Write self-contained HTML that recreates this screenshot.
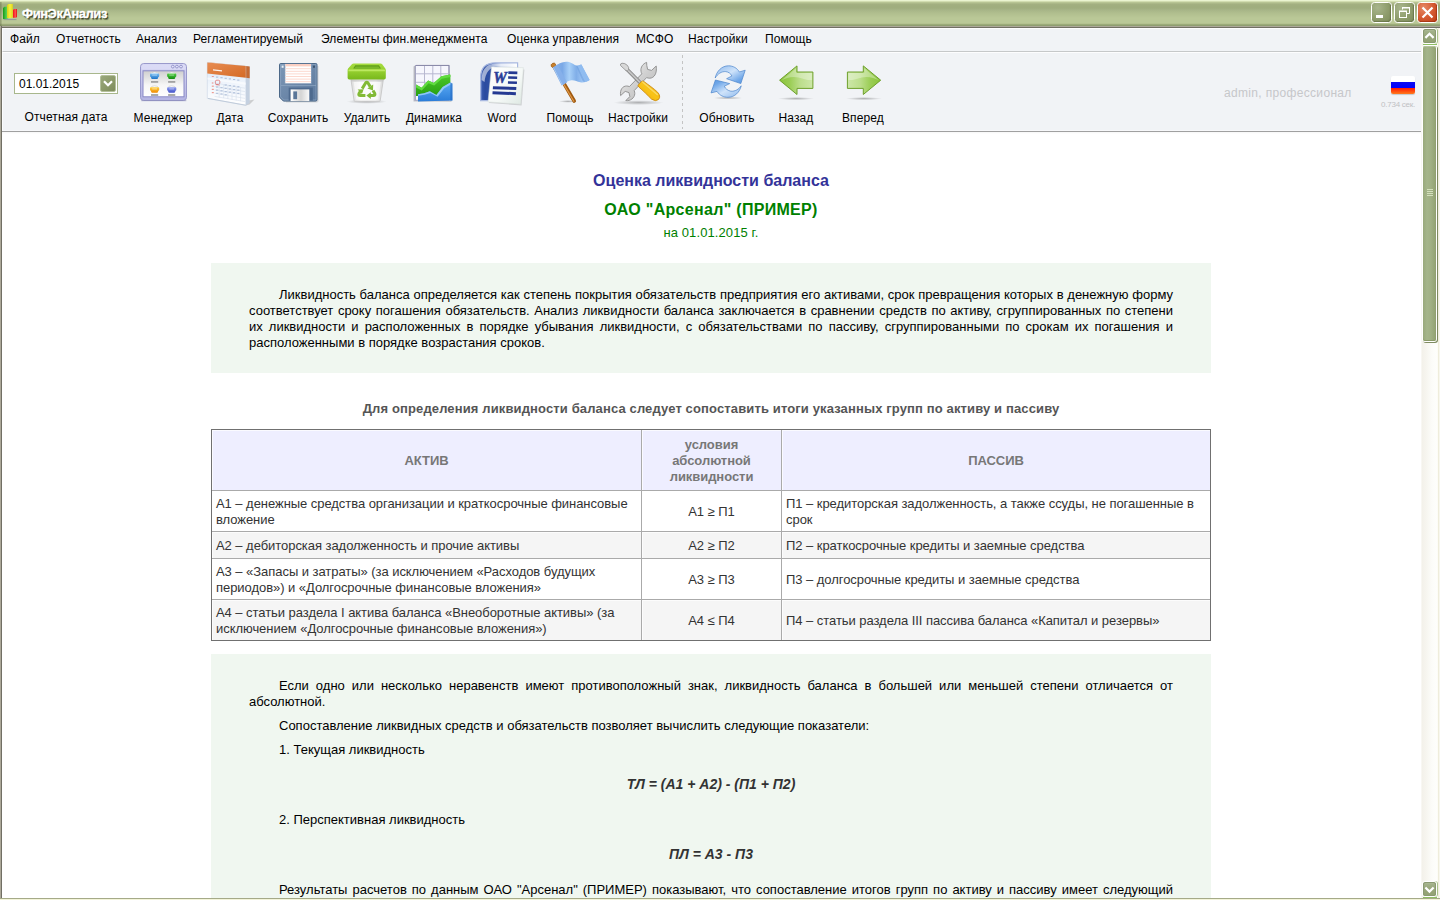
<!DOCTYPE html>
<html lang="ru">
<head>
<meta charset="utf-8">
<title>ФинЭкАнализ</title>
<style>
*{box-sizing:border-box;margin:0;padding:0}
html,body{width:1440px;height:900px;overflow:hidden;background:#fff;font-family:"Liberation Sans",sans-serif;}
body{position:relative;color:#000}
#titlebar{position:absolute;left:0;top:0;width:1440px;height:28px;
 background:linear-gradient(to bottom,#eaf4d0 0,#eaf4d0 1px,#d2ddb0 1px,#d2ddb0 2px,#b7c493 2px,#b7c493 3px,#abb888 3px,#abb888 4px,#a3b081 4px,#a0ae7e 6px,#a0ae7e 8px,#a7b587 10px,#b0be8e 13px,#b8c695 17px,#bac897 18px,#bac897 23px,#b4c290 23px,#b4c290 24px,#9cab7a 24px,#9cab7a 25px,#8f9e70 25px,#8f9e70 26px,#aca899 26px,#aca899 27px,#716f64 27px,#716f64 28px);}
#titlebar:before{content:"";position:absolute;left:0;top:2px;width:2px;height:24px;background:linear-gradient(to right,rgba(90,100,60,.45),rgba(90,100,60,.15))}
#titlebar .ttl{position:absolute;left:22px;top:6px;font-size:13px;font-weight:bold;color:#fff;letter-spacing:-0.45px;-webkit-text-stroke:.35px #fff;text-shadow:1px 1px 0 #3a4222,1.5px 1.5px 1px rgba(50,58,30,.6);white-space:nowrap}
#lborder{position:absolute;left:0;top:26px;width:2px;height:872px;background:linear-gradient(to right,#aca899 0,#aca899 1px,#716f64 1px,#716f64 2px)}
#bborder{position:absolute;left:0;top:898px;width:1440px;height:2px;background:linear-gradient(to bottom,#a5aa88 0,#a5aa88 1px,#f3f4d9 1px,#f3f4d9 2px)}
#menubar{position:absolute;left:2px;top:28px;width:1419px;height:24px;background:#f1f3f6;border-top:1px solid #fdfdfe;border-left:1px solid #fbfcfd;border-bottom:1px solid #c6c8c9;font-size:12px;letter-spacing:.1px;white-space:nowrap}
#menubar span{position:absolute;top:3px;margin-left:-1px}
#toolbar{position:absolute;left:2px;top:52px;width:1419px;height:80px;background:#f1f3f6;border-top:1px solid #fdfdfe;border-bottom:1px solid #a0a0a0;box-shadow:inset 1px 0 0 #fbfcfd,inset 0 -1px 0 #f7f8fa}
.tb{position:absolute;top:0;height:80px;font-size:12px;letter-spacing:.12px;text-align:center;white-space:nowrap}
.tb svg{position:absolute;left:50%;margin-left:-24px;top:6px}
.tb .lb{position:absolute;left:-62px;width:124px;top:58px;text-align:center}
#content{position:absolute;left:2px;top:132px;width:1419px;height:766px;background:linear-gradient(to bottom,#f7f7f7 0,#fff 2px);overflow:hidden}
#doc{position:absolute;left:209px;top:0;width:1000px;}
.gbox{background:#f0f7f0;padding:0 38px;font-size:13px;line-height:16px;text-align:justify}
.gbox p{text-indent:30px}
table.t{border-collapse:separate;border-spacing:0;width:1000px;font-size:13px;color:#333;table-layout:fixed;border:1px solid #707070}
table.t td,table.t th{border:0;border-left:1px solid #aaa;border-top:1px solid #aaa;padding:2px 4px 0 4px;line-height:16px;vertical-align:middle;letter-spacing:-.05px;box-shadow:inset 1px 1px 0 rgba(255,255,255,.7)}
table.t tr>*:first-child{border-left:0}table.t tr.hr th{border-top:0}
table.t th{background:#eeeeff;color:#777;font-weight:bold;font-size:13px;text-align:center}

#datebox{position:absolute;left:12px;top:20px;width:104px;height:21px;border:1px solid #a8b78c;background:#fff;font-size:12px}
#datebox span{position:absolute;left:4px;top:3px}
#datebox i{position:absolute;right:1px;top:1px;width:16px;height:17px;background:linear-gradient(135deg,#9aa87c,#8a9868 60%,#7d8b5c);border:1px solid #b4c09c;border-radius:2px;display:block}
#datebox i svg{position:absolute;left:-1px;top:-1px}
#tbsep{position:absolute;left:680px;top:2px;width:1px;height:74px;background:repeating-linear-gradient(to bottom,#c4c4c4 0,#c4c4c4 3px,transparent 3px,transparent 6px)}
#user{position:absolute;left:1222px;top:33px;font-size:12px;letter-spacing:.33px;color:#c6c7ca;white-space:nowrap}
#flag{position:absolute;left:1389px;top:23px;width:24px;height:18px;border-radius:2px;background:linear-gradient(to bottom,#fff 0,#fff 6px,#0a0af0 6px,#0000ff 12px,#ff1a00 12px,#ff7a1c 18px);box-shadow:0 1px 1px rgba(0,0,0,.18)}
#sec{position:absolute;left:1353px;width:60px;text-align:right;top:47px;font-size:8px;line-height:10px;letter-spacing:-.25px;color:#bfc0c3;white-space:nowrap}
.h1{position:absolute;left:0;width:1000px;top:40px;text-align:center;font-size:16px;font-weight:bold;color:#333399;white-space:nowrap}
.h2{position:absolute;left:0;width:1000px;top:69px;text-align:center;font-size:16px;letter-spacing:0.3px;font-weight:bold;color:#008000;white-space:nowrap}
.h3{position:absolute;left:0;width:1000px;top:93px;text-align:center;font-size:13px;letter-spacing:.1px;color:#008000;white-space:nowrap}
#g1{position:absolute;left:0;top:131px;width:1000px;height:110px;padding-top:24px}
.h4{position:absolute;left:0;width:1000px;top:269px;text-align:center;font-size:13px;letter-spacing:0.13px;font-weight:bold;color:#555;white-space:nowrap}
table.t{position:absolute;left:0;top:297px}
table.t td.c{text-align:center}
table.t tr.alt td{background:#f5f5f5}
table.t tr.hr th{height:60px}table.t tr.r1 td,table.t tr.r3 td,table.t tr.r4 td{height:41px}table.t tr.r2 td{height:27px}
#g2{position:absolute;left:0;top:522px;width:1000px;height:300px;padding-top:24px}
.f{text-align:center;font-weight:bold;font-style:italic;font-size:14px;color:#333;text-indent:0}

.wb{position:absolute;top:2px;width:21px;height:21px;border:1px solid #fff;border-radius:3.5px;background:radial-gradient(ellipse at 30% 25%,#a8b58c 0,#8f9d6d 55%,#7d8c5a 100%);box-shadow:inset -1px -1px 1px rgba(60,70,30,.35)}
.wb.cl{background:radial-gradient(ellipse at 30% 25%,#e58a66 0,#d55c34 50%,#c03c14 100%);box-shadow:inset -1px -1px 1px rgba(120,30,0,.45)}
.wb svg{position:absolute;left:0;top:0}
#vscroll{position:absolute;left:1421px;top:28px;width:19px;height:870px;background:linear-gradient(to right,#fdfdfb 0,#f3f1ea 1px,#f6f5ef 5px,#fcfcf9 11px,#fefefc 16px,#fbfaf2 17px,#efeddc 17px,#efeddc 18px,#f8f7ee 18px)}
.sbtn{position:absolute;left:1px;width:15px;height:16px;background:#fff;border-radius:3px;box-shadow:1px 0 0 #a9c38a}
.sbtn svg{position:absolute;left:1px;top:1px;background:linear-gradient(to bottom,#b9c7a2 0,#a3b28a 2px,#97a679 50%,#93a273 100%);border-radius:2.5px;box-shadow:inset 0 0 0 1px #8a9971}
.sline{position:absolute;left:2px;width:14px;height:1px;background:#8fbf62}
#thumb{position:absolute;left:1px;top:17px;width:15px;height:297px;background:#fff;border-radius:3px;box-shadow:1px 1px 0 #7f8b61}
#thumb:before{content:"";position:absolute;left:1px;top:1px;width:13px;bottom:1px;border-radius:2px;background:linear-gradient(to right,#99a97b 0,#a5b58a 4px,#a0b083 8px,#94a474 12px,#8e9e6e 13px);box-shadow:inset 0 1px 0 #b4c29c,inset 0 -1px 0 #8a9a68}
#thumb i{position:absolute;left:5px;top:144px;width:6px;height:8px;background:repeating-linear-gradient(to bottom,#d4e0bc 0,#d4e0bc 1px,transparent 1px,transparent 2px)}
</style>
</head>
<body>
<div id="titlebar">
 <svg width="18" height="20" style="position:absolute;left:2px;top:2px" viewBox="2 2 18 20">
  <defs><linearGradient id="tg" x1="0" y1="0" x2="1" y2="0"><stop offset="0" stop-color="#189818"/><stop offset=".45" stop-color="#44c444"/><stop offset="1" stop-color="#7ae67a"/></linearGradient>
  <linearGradient id="ty" x1="0" y1="0" x2="1" y2="0"><stop offset="0" stop-color="#d8d010"/><stop offset=".5" stop-color="#f4f040"/><stop offset="1" stop-color="#e0d818"/></linearGradient>
  <linearGradient id="tr" x1="0" y1="0" x2="1" y2="0"><stop offset="0" stop-color="#f01414"/><stop offset=".6" stop-color="#ff5050"/><stop offset="1" stop-color="#e01010"/></linearGradient></defs>
  <path d="M3.5 19.6H16.5" stroke="#6a6a9a" stroke-width="1" opacity=".5"/>
  <path d="M3 8L4.5 6.8H8.8V18L7.5 19H3Z" fill="url(#tg)"/>
  <path d="M7 5.2L8.4 4H12.8V17.2L11.5 18H7Z" fill="url(#ty)"/>
  <path d="M13 10L14 9H17V17L16 17.8H13Z" fill="url(#tr)"/>
 </svg>
 <div class="ttl">ФинЭкАнализ</div>
</div>
<div class="wb" style="left:1371px"><svg width="19" height="19" viewBox="0 0 19 19"><rect x="4" y="12" width="7" height="3" fill="#fff"/></svg></div>
<div class="wb" style="left:1394px"><svg width="19" height="19" viewBox="0 0 19 19"><path d="M7.5 6.5V4.5H14.5V10.5H12" fill="none" stroke="#fff" stroke-width="1"/><path d="M7 4.75H15" stroke="#fff" stroke-width="1.5"/><rect x="4.5" y="8.5" width="7" height="6" fill="none" stroke="#fff" stroke-width="1"/><path d="M4 8.25H12" stroke="#fff" stroke-width="1.5"/></svg></div>
<div class="wb cl" style="left:1417px"><svg width="19" height="19" viewBox="0 0 19 19"><path d="M4.5 4.5L14.5 14.5M14.5 4.5L4.5 14.5" stroke="#fff" stroke-width="2.2" stroke-linecap="butt"/></svg></div>
<div id="menubar">
 <span style="left:8px">Файл</span><span style="left:54px">Отчетность</span><span style="left:134px">Анализ</span><span style="left:191px">Регламентируемый</span><span style="left:319px">Элементы фин.менеджмента</span><span style="left:505px">Оценка управления</span><span style="left:634px">МСФО</span><span style="left:686px">Настройки</span><span style="left:763px">Помощь</span>
</div>
<div id="toolbar">
 <div id="datebox"><span>01.01.2015</span><i><svg width="16" height="17" viewBox="0 0 16 17"><path d="M4 6.2 L8 10.2 L12 6.2" fill="none" stroke="#fff" stroke-width="2.2"/></svg></i></div>
 <div class="tb" style="left:64px"><div class="lb" style="top:57px">Отчетная дата</div></div>
 <div class="tb" style="left:161px"><!--ICON1--><div class="lb">Менеджер</div></div>
 <div class="tb" style="left:228px"><!--ICON2--><div class="lb">Дата</div></div>
 <div class="tb" style="left:296px"><!--ICON3--><div class="lb">Сохранить</div></div>
 <div class="tb" style="left:365px"><!--ICON4--><div class="lb">Удалить</div></div>
 <div class="tb" style="left:432px"><!--ICON5--><div class="lb">Динамика</div></div>
 <div class="tb" style="left:500px"><!--ICON6--><div class="lb">Word</div></div>
 <div class="tb" style="left:568px"><!--ICON7--><div class="lb">Помощь</div></div>
 <div class="tb" style="left:636px"><!--ICON8--><div class="lb">Настройки</div></div>
 <div id="tbsep"></div>
 <div class="tb" style="left:725px"><!--ICON9--><div class="lb">Обновить</div></div>
 <div class="tb" style="left:794px"><!--ICON10--><div class="lb">Назад</div></div>
 <div class="tb" style="left:861px"><!--ICON11--><div class="lb">Вперед</div></div>
 <div id="user">admin, профессионал</div>
 <div id="flag"></div>
 <div id="sec">0.734 сек.</div>
</div>
<svg id="icons" style="position:absolute;left:0;top:52px" width="1440" height="80" viewBox="0 52 1440 80">
<defs>
 <linearGradient id="gMgr" x1="0" y1="0" x2="0" y2="1"><stop offset="0" stop-color="#d6d6f4"/><stop offset="1" stop-color="#b4b4e2"/></linearGradient>
 <linearGradient id="gMgrP" x1="0" y1="0" x2="0" y2="1"><stop offset="0" stop-color="#cfcfcf"/><stop offset=".55" stop-color="#f6f6f6"/><stop offset="1" stop-color="#fff"/></linearGradient>
 <linearGradient id="gBlue" x1="0" y1="0" x2="0" y2="1"><stop offset="0" stop-color="#7cc0f4"/><stop offset="1" stop-color="#1c74c8"/></linearGradient>
 <linearGradient id="gGreen" x1="0" y1="0" x2="0" y2="1"><stop offset="0" stop-color="#58d048"/><stop offset="1" stop-color="#108c10"/></linearGradient>
 <linearGradient id="gOrange" x1="0" y1="0" x2="0" y2="1"><stop offset="0" stop-color="#ffd040"/><stop offset="1" stop-color="#f08800"/></linearGradient>
 <linearGradient id="gPurple" x1="0" y1="0" x2="0" y2="1"><stop offset="0" stop-color="#8c9cf0"/><stop offset="1" stop-color="#4050c8"/></linearGradient>
 <linearGradient id="gCalH" x1="0" y1="0" x2="1" y2="1"><stop offset="0" stop-color="#e88c52"/><stop offset="1" stop-color="#d46a26"/></linearGradient>
 <linearGradient id="gCalB" x1="0" y1="0" x2="0" y2="1"><stop offset="0" stop-color="#d4e2f4"/><stop offset=".5" stop-color="#f0f5fc"/><stop offset="1" stop-color="#ffffff"/></linearGradient>
 <linearGradient id="gFl" x1="0" y1="0" x2="1" y2="1"><stop offset="0" stop-color="#7d97b6"/><stop offset="1" stop-color="#5b789c"/></linearGradient>
 <linearGradient id="gSh" x1="0" y1="0" x2="1" y2="0"><stop offset="0" stop-color="#ffffff"/><stop offset=".55" stop-color="#d4d4d4"/><stop offset="1" stop-color="#fafafa"/></linearGradient>
 <linearGradient id="gLid" x1="0" y1="0" x2="0" y2="1"><stop offset="0" stop-color="#a6dc40"/><stop offset=".45" stop-color="#96d030"/><stop offset="1" stop-color="#78b81c"/></linearGradient>
 <linearGradient id="gBin" x1="0" y1="0" x2="1" y2="0"><stop offset="0" stop-color="#dcdcdc"/><stop offset=".3" stop-color="#f8f8f8"/><stop offset=".75" stop-color="#f4f4f4"/><stop offset="1" stop-color="#d8d8d8"/></linearGradient>
 <radialGradient id="gShadow"><stop offset="0" stop-color="#000" stop-opacity=".28"/><stop offset="1" stop-color="#000" stop-opacity="0"/></radialGradient>
</defs>
<!-- Manager -->
<g>
 <rect x="140.5" y="63.5" width="46" height="37" rx="3.2" fill="url(#gMgr)" stroke="#9a9acc"/>
 <rect x="141.3" y="100" width="45" height="1.2" fill="#8c8cb8" opacity=".55"/>
 <path d="M141.5 69.5 V66.5 Q141.5 64.5 143.5 64.5 H183.5 Q185.5 64.5 185.5 66.5 V69.5Z" fill="#dcdcf6" opacity=".8"/>
 <circle cx="172.8" cy="66.6" r="1.4" fill="#e6e6fa" stroke="#8484c0" stroke-width=".8"/><circle cx="176.9" cy="66.6" r="1.4" fill="#e6e6fa" stroke="#8484c0" stroke-width=".8"/><circle cx="181" cy="66.6" r="1.4" fill="#e6e6fa" stroke="#8484c0" stroke-width=".8"/>
 <rect x="143" y="70.8" width="41" height="26" fill="url(#gMgrP)" stroke="#8a8ac6"/>
 <g id="mb">
  <ellipse cx="154.6" cy="73.6" rx="3.6" ry="1.5" fill="#fff" stroke="#b8b8b8" stroke-width=".5"/>
 </g>
 <ellipse cx="171.7" cy="73.6" rx="3.6" ry="1.5" fill="#fff" stroke="#b8b8b8" stroke-width=".5"/>
 <ellipse cx="154.6" cy="87.4" rx="3.6" ry="1.5" fill="#fff" stroke="#b8b8b8" stroke-width=".5"/>
 <ellipse cx="171.7" cy="87.4" rx="3.6" ry="1.5" fill="#fff" stroke="#b8b8b8" stroke-width=".5"/>
 <path d="M150 74.2 Q150 73.4 151 73.4 H158.2 Q159.2 73.4 159.2 74.2 V76 Q159.2 76.8 158.3 77 L158 78.2 Q157.8 79 157 79 H152.2 Q151.4 79 151.2 78.2 L150.9 77 Q150 76.8 150 76Z" fill="url(#gBlue)"/>
 <path d="M167.1 74.2 Q167.1 73.4 168.1 73.4 H175.3 Q176.3 73.4 176.3 74.2 V76 Q176.3 76.8 175.4 77 L175.1 78.2 Q174.9 79 174.1 79 H169.3 Q168.5 79 168.3 78.2 L168 77 Q167.1 76.8 167.1 76Z" fill="url(#gGreen)"/>
 <path d="M150 88 Q150 87.2 151 87.2 H158.2 Q159.2 87.2 159.2 88 V89.8 Q159.2 90.6 158.3 90.8 L158 92 Q157.8 92.8 157 92.8 H152.2 Q151.4 92.8 151.2 92 L150.9 90.8 Q150 90.6 150 89.8Z" fill="url(#gOrange)"/>
 <path d="M167.1 88 Q167.1 87.2 168.1 87.2 H175.3 Q176.3 87.2 176.3 88 V89.8 Q176.3 90.6 175.4 90.8 L175.1 92 Q174.9 92.8 174.1 92.8 H169.3 Q168.5 92.8 168.3 92 L168 90.8 Q167.1 90.6 167.1 89.8Z" fill="url(#gPurple)"/>
 <rect x="152.2" y="74.6" width="4.8" height="1" fill="#fff" opacity=".45"/><rect x="169.3" y="74.6" width="4.8" height="1" fill="#fff" opacity=".45"/><rect x="152.2" y="88.4" width="4.8" height="1" fill="#fff" opacity=".5"/><rect x="169.3" y="88.4" width="4.8" height="1" fill="#fff" opacity=".45"/>
 <rect x="151" y="81" width="7.2" height="1.8" fill="#a2a2a2"/><rect x="168.1" y="81" width="7.2" height="1.8" fill="#a2a2a2"/>
 <rect x="151" y="94.1" width="7.2" height="1.8" fill="#a2a2a2"/><rect x="168.1" y="94.1" width="7.2" height="1.8" fill="#a2a2a2"/>
</g>
<!-- Calendar -->
<g>
 <path d="M246 101 L254.5 99.5 L249.5 104.5 L245.8 105.4Z" fill="#888" opacity=".35"/>
 <path d="M245.8 66.1 L249.7 66.6 L249.7 103 L245.8 105.4Z" fill="#c4d0e0"/>
 <path d="M245.8 66.1 L249.7 66.6 L249.7 78.2 L245.8 77.8Z" fill="#c46a34"/>
 <path d="M207.3 62.6 L245.8 66.1 L245.8 105.4 L207.3 98.4Z" fill="url(#gCalB)" stroke="#c8d4e4" stroke-width=".6"/>
 <path d="M207.3 62.6 L245.8 66.1 L245.8 77.8 L207.3 73.5Z" fill="url(#gCalH)"/>
 <path d="M207.3 62.6 L245.8 66.1 L249.7 66.6 L211 62.4Z" fill="#f0a878"/>
 <path d="M213 69.2 L222 70.2 L222 71.6 L213 70.6Z" fill="#fff" opacity=".9"/>
 <path d="M207.3 77.6 L245.8 82.6 L245.8 84.8 L207.3 79.6Z" fill="#fff" opacity=".55"/>
 <g fill="#6a86b8" opacity=".5">
  <rect x="216" y="76.6" width="2.2" height="1"/><rect x="220.4" y="77.2" width="2.2" height="1"/><rect x="224.6" y="77.8" width="2.2" height="1"/><rect x="228.8" y="78.4" width="2.2" height="1"/><rect x="233" y="79" width="2.2" height="1"/><rect x="237.2" y="79.6" width="2.2" height="1"/>
  <rect x="224.6" y="84.4" width="2.2" height="1.2"/><rect x="228.8" y="85" width="2.2" height="1.2"/><rect x="233" y="85.6" width="2.2" height="1.2"/><rect x="237.2" y="86.2" width="2.2" height="1.2"/>
  <rect x="216" y="86.4" width="2.2" height="1.2"/><rect x="220.4" y="87" width="2.2" height="1.2"/><rect x="224.6" y="87.8" width="2.2" height="1.2"/><rect x="228.8" y="88.4" width="2.2" height="1.2"/><rect x="233" y="89" width="2.2" height="1.2"/><rect x="237.2" y="89.6" width="2.2" height="1.2"/>
  <rect x="216" y="89.6" width="2.2" height="1.2"/><rect x="220.4" y="90.2" width="2.2" height="1.2"/><rect x="224.6" y="91" width="2.2" height="1.2"/><rect x="228.8" y="91.6" width="2.2" height="1.2"/><rect x="233" y="92.2" width="2.2" height="1.2"/><rect x="237.2" y="92.8" width="2.2" height="1.2"/>
  <rect x="216" y="92.8" width="2.2" height="1.2"/><rect x="220.4" y="93.4" width="2.2" height="1.2"/><rect x="224.6" y="94.2" width="2.2" height="1.2"/>
 </g>
 <g fill="#e86050" opacity=".6"><rect x="211.8" y="76" width="2" height="1"/><rect x="211.8" y="82.4" width="1.6" height="1.2"/><rect x="211.8" y="85.6" width="2" height="1.2"/><rect x="211.8" y="88.8" width="2" height="1.2"/><rect x="211.8" y="92" width="2" height="1.2"/></g>
 <rect x="215.4" y="80.2" width="4.4" height="4.2" rx="1.4" fill="none" stroke="#d85858" stroke-width=".8" opacity=".85"/><path d="M215.6 84.6 L219.8 85.2" stroke="#d85858" stroke-width=".8" opacity=".7"/>
 <path d="M208 98.4 L245.8 105.2" stroke="#b8c4d4" stroke-width=".8"/><g stroke="#c6d2e4" stroke-width=".5" opacity=".8"><path d="M214.6 83 L245 88.2M214.6 86.4 L245 91.6M214.6 89.8 L245 95M214.6 93.2 L245 98.4M214.6 96.4 L245 101.6"/><path d="M219.2 84 V97.4M223.6 84.8 V98.2M227.8 85.4 V99M232 86.2 V99.8M236.2 86.8 V100.4M240.6 87.6 V101.2"/></g>
</g>
<!-- Floppy -->
<g>
 <path d="M280.8 63.5 H315.8 Q317 63.5 317 64.7 V99.9 Q317 101.1 315.8 101.1 H283.4 L279.5 97.2 V64.7 Q279.5 63.5 280.8 63.5Z" fill="url(#gFl)" stroke="#4c6888"/>
 <path d="M280.6 64.6 H316 V100 H283.8 L280.6 96.8Z" fill="none" stroke="#93abc6" stroke-width=".9" opacity=".7"/>
 <rect x="284.7" y="63.8" width="27" height="20" fill="#8aa2be"/>
 <rect x="285.4" y="64" width="25.6" height="19.2" fill="#fff"/>
 <rect x="285.4" y="64" width="25.6" height="2.4" fill="#fbcfc2"/>
 <g fill="#fcd9cf"><rect x="285.4" y="68.2" width="25.6" height="1"/><rect x="285.4" y="70.8" width="25.6" height="1"/><rect x="285.4" y="73.4" width="25.6" height="1"/><rect x="285.4" y="76" width="25.6" height="1"/><rect x="285.4" y="78.6" width="25.6" height="1"/><rect x="285.4" y="81.2" width="25.6" height="1"/></g>
 <rect x="281.6" y="65.6" width="2" height="2.2" fill="#e8eef4"/><rect x="313" y="65.6" width="2" height="2.2" fill="#3c5470"/>
 <rect x="281" y="85" width="35" height="1" fill="#8ea6c2" opacity=".7"/>
 <rect x="288.7" y="87.6" width="24.1" height="13" fill="#4e6a8e"/>
 <rect x="290.6" y="89.4" width="18.7" height="11.7" fill="url(#gSh)"/>
 <rect x="293.3" y="91.4" width="3.8" height="7.8" fill="#5a7698"/>
 <path d="M318 66 V101.2 Q318 102 317 102 H286" fill="none" stroke="#000" stroke-opacity=".12"/>
</g>
<!-- Trash -->
<g>
 <ellipse cx="366.7" cy="101.6" rx="20" ry="2.2" fill="url(#gShadow)"/>
 <path d="M350.8 78.5 H383.5 L380.2 100.6 Q380.1 101.3 379.4 101.3 H354.9 Q354.2 101.3 354.1 100.6Z" fill="url(#gBin)" stroke="#c6c6c6" stroke-width=".9"/><path d="M353.6 82 L356.2 99.4 H378.2 L380.8 82Z" fill="#fff" opacity=".55"/>
 <path d="M351 79.4 H383.3 L383 81.6 H351.3Z" fill="#b8b8b8" opacity=".5"/>
 <path d="M353.6 63.5 H380.6 Q381.6 63.5 382.2 64.3 L385.3 68.6 Q385.8 69.3 385.8 70.2 V77.8 Q385.8 79.4 384.2 79.4 H349.2 Q347.6 79.4 347.6 77.8 V70.2 Q347.6 69.3 348.1 68.6 L351.9 64.3 Q352.6 63.5 353.6 63.5Z" fill="url(#gLid)"/>
 <path d="M355.3 65.2 H378.9 L381 68.6 H353.2Z" fill="#5f9e18"/>
 <path d="M355.8 66.4 H378.4 L379.8 68.6 H354.4Z" fill="#7ab82a"/>
 <path d="M348.4 70.4 Q348.4 69.6 349.4 69.6 H384 Q385 69.6 385 70.4 V71.2 H348.4Z" fill="#c8f070" opacity=".75"/>
 <g fill="none" stroke="#82ba36" stroke-width="3" stroke-linejoin="round">
  <path d="M362.2 88.6 L365.6 83 Q366.8 81.4 368 83 L370.2 86.6"/>
  <path d="M373 90.6 L374.8 93.6 Q375.4 95.6 373.4 95.6 L369.6 95.6"/>
  <path d="M365.4 95.6 L360.4 95.6 Q358.2 95.6 359 93.6 L360.4 91.2"/>
 </g>
 <g fill="#82ba36">
  <path d="M367.4 88.4 L373.2 84.6 L373 90.4Z"/>
  <path d="M370.8 92.2 L370.8 99 L366.4 95.6Z"/>
  <path d="M357.6 89.6 L363.6 89.2 L362 94Z"/>
 </g>
</g>
<!-- Chart -->
<defs>
 <linearGradient id="gChG" x1="0" y1="0" x2="0" y2="1"><stop offset="0" stop-color="#4cc82c"/><stop offset="1" stop-color="#28a010"/></linearGradient>
 <linearGradient id="gChB" x1="0" y1="0" x2="0" y2="1"><stop offset="0" stop-color="#5aaaf4"/><stop offset="1" stop-color="#2a7cd8"/></linearGradient>
 <linearGradient id="gWordBk" x1="0" y1="0" x2="1" y2="0"><stop offset="0" stop-color="#5070c0"/><stop offset=".12" stop-color="#2a4a9e"/><stop offset=".3" stop-color="#3a5cb0"/><stop offset=".55" stop-color="#c8d4ee"/><stop offset="1" stop-color="#ffffff"/></linearGradient>
 <linearGradient id="gWordP" x1="0" y1="0" x2="1" y2="1"><stop offset="0" stop-color="#ffffff"/><stop offset=".6" stop-color="#f4f8f6"/><stop offset="1" stop-color="#dde8e2"/></linearGradient>
 <linearGradient id="gFlag" x1="0" y1="0" x2="1" y2="0"><stop offset="0" stop-color="#86b2ec"/><stop offset=".22" stop-color="#7aa8e6"/><stop offset=".42" stop-color="#a8d0f8"/><stop offset=".62" stop-color="#80aee8"/><stop offset=".8" stop-color="#9cc4f4"/><stop offset="1" stop-color="#88b4ec"/></linearGradient>
 <linearGradient id="gPole" x1="0" y1="0" x2="1" y2="0"><stop offset="0" stop-color="#e8a458"/><stop offset="1" stop-color="#a85c10"/></linearGradient>
 <linearGradient id="gWr" x1="0" y1="0" x2="1" y2="1"><stop offset="0" stop-color="#f4f4f4"/><stop offset=".5" stop-color="#d0d0d0"/><stop offset="1" stop-color="#b4b4b4"/></linearGradient>
 <linearGradient id="gHandle" x1="0" y1="1" x2="1" y2="0"><stop offset="0" stop-color="#f0a008"/><stop offset=".5" stop-color="#f8c418"/><stop offset="1" stop-color="#eca010"/></linearGradient>
 <linearGradient id="gRef1" x1="0" y1="0" x2="1" y2="1"><stop offset="0" stop-color="#8cb8ec"/><stop offset=".45" stop-color="#cfe3fa"/><stop offset=".8" stop-color="#6ea6e8"/><stop offset="1" stop-color="#5a98e2"/></linearGradient>
 <linearGradient id="gRef2" x1="1" y1="1" x2="0" y2="0"><stop offset="0" stop-color="#8cb8ec"/><stop offset=".45" stop-color="#cfe3fa"/><stop offset=".8" stop-color="#6ea6e8"/><stop offset="1" stop-color="#5a98e2"/></linearGradient>
 <linearGradient id="gArrL" x1="0" y1="0" x2="1" y2="0"><stop offset="0" stop-color="#8ac43a"/><stop offset=".3" stop-color="#9acd54"/><stop offset=".62" stop-color="#bcde8c"/><stop offset="1" stop-color="#cde7a8"/></linearGradient>
 <linearGradient id="gArrR" x1="1" y1="0" x2="0" y2="0"><stop offset="0" stop-color="#8ac43a"/><stop offset=".3" stop-color="#9acd54"/><stop offset=".62" stop-color="#bcde8c"/><stop offset="1" stop-color="#cde7a8"/></linearGradient>
</defs>
<g>
 <path d="M413.6 66.6 L415.4 65.2 V100.2 L413.6 101.6Z" fill="#9a9aa8" opacity=".7"/>
 <path d="M413.6 101.6 L415.4 100.2 H450 L452 101.8Z" fill="#000" opacity=".18"/>
 <rect x="415.5" y="65.5" width="33.3" height="34.8" fill="#f6f6fd" stroke="#a6a6c2"/><path d="M416 65.4 H449.2 V76" fill="none" stroke="#7c7c9c" stroke-width="1" opacity=".7"/>
 <g stroke="#b8b8d0" stroke-width="1"><path d="M424.5 66V100M432.8 66V100M440.8 66V100M416 73.8H448.5M416 82.3H448.5M416 90.8H448.5"/></g>
 <path d="M416 84.6 L421.6 87.8 L428.2 80.6 L433.8 83 L441.4 76.2 L450 74.6 L450.4 75 V96 H416Z" fill="url(#gChG)"/>
 <path d="M416 84.6 L421.6 87.8 L428.2 80.6 L433.8 83 L441.4 76.2 L450 74.6 L450.4 75 L450.4 77 L441.8 78.8 L434.2 85.6 L428.6 83.2 L421.8 90.6 L416 87.6Z" fill="#60dc40"/>
 <path d="M418 94.3 L424 93.2 L429.8 91.2 L436.4 95 L442.6 87 L450.4 82.6 L452.4 83.6 V100.4 L418 101.6Z" fill="url(#gChB)"/>
 <path d="M418 94.3 L424 93.2 L429.8 91.2 L436.4 95 L442.6 87 L450.4 82.6 L452.4 83.6 L444 88.6 L437.6 96.8 L430.4 93 L424.4 94.8 L418 95.8Z" fill="#9cd0fa" opacity=".85"/>
 <path d="M450.4 82.6 L452.4 83.6 V100.4 L450.4 100.8Z" fill="#2468c0" opacity=".6"/>
</g>
<!-- Word -->
<g>
 <path d="M480.6 100.6 V77.5 Q480.6 62.8 495.5 62.8 H517.6 V100.6Z" fill="url(#gWordBk)" stroke="#a8b8e0" stroke-width="1.2"/>
 <path d="M482.2 99.2 V78 Q482.2 66 492 64.4 L490 99.2Z" fill="#2c4ca0" opacity=".55"/><path d="M481.6 80 Q481.6 64 495.5 63.8 H516.6 V66.5 H496 Q486 68 484.5 82Z" fill="#fff" opacity=".55"/>
 <path d="M492.4 68.8 L524.4 69.4 L521.6 105.4 L489 103Z" fill="#000" opacity=".14"/>
 <path d="M491.5 66.9 L523.4 67.7 L520.7 104.2 L488 101.9Z" fill="url(#gWordP)" stroke="#d4dcd8" stroke-width=".5"/>
 <text x="493.2" y="83" font-family="Liberation Serif" font-weight="bold" font-style="italic" font-size="16.5" fill="#2b3f98" stroke="#2b3f98" stroke-width=".55" textLength="13.6" lengthAdjust="spacingAndGlyphs">W</text>
 <g fill="#253a92">
  <path d="M508.4 71.2 L517.4 71.5 L517.3 74.3 L508.3 74Z"/><path d="M508.2 76.2 L517.2 76.5 L517.1 79.1 L508.1 78.8Z"/><path d="M508 81.2 L517 81.5 L516.9 84.1 L507.9 83.8Z"/>
  <path d="M493 86.2 L516.4 87 L516.2 90 L492.8 89.2Z"/><path d="M492.6 91.2 L516 92.2 L515.8 95.2 L492.4 94.2Z"/>
 </g>
</g>
<!-- Flag -->
<g>
 <ellipse cx="568" cy="101.4" rx="9" ry="1.4" fill="url(#gShadow)"/>
 <path d="M553.2 65.2 L574.2 101" stroke="#a05a10" stroke-width="3.6" stroke-linecap="round"/>
 <path d="M552.8 65.6 L573.8 101.2" stroke="#e09848" stroke-width="1.2" stroke-linecap="round"/>
 <ellipse cx="553.4" cy="65.2" rx="2.4" ry="2" fill="#c8802c" stroke="#9a5810" stroke-width=".6" transform="rotate(-30 553.4 65.2)"/>
 <path d="M554.6 66.6 L557.6 64.6 C561.5 62 565.5 61.2 569 62 C572.5 62.8 574.5 65.6 577.6 65.6 C579.2 65.6 580.4 64.2 581.4 64.4 L589.6 80 C586.8 82 583.4 82.9 580.2 82.2 C577 81.5 575 80 571.4 80.2 C568.2 80.4 566.2 82 564.8 83.6 L562.8 85Z" fill="url(#gFlag)"/>
 <path d="M552.6 67.6 L557.6 64.6 L567 82.4 L561.6 85.6Z" fill="#86b0ea"/><path d="M553.4 67.4 L562.4 85" stroke="#a8ccf6" stroke-width="1" opacity=".8"/><path d="M575.6 64.6 C576 66 576.6 66.4 577.6 66.2 L585.4 81.8 C584 82 583 81.6 582.4 80.6Z" fill="#6c9cdc" opacity=".55"/>
 <path d="M577.6 65.6 C579.2 65.6 580.4 64.2 581.4 64.4 L589.6 80 C588 81.2 586.4 81.8 585.4 82Z" fill="#90bcf0"/>
</g>
<!-- Tools -->
<g>
 <ellipse cx="638.6" cy="102.6" rx="25" ry="2.4" fill="url(#gShadow)"/>
 <path d="M646.6 62.4 C643 63.6 640.4 67.2 641 71.2 C641.2 72.4 641.4 73 641.8 73.8 L629.4 86.6 C628.4 86.2 627.6 86 626.6 86 C622.6 86 619.8 89.6 620.6 95.6 L625.2 91.4 L629 92.6 L629.8 96.6 L625.8 100.6 C630.4 101.2 634.6 98 634.8 93.6 C634.8 92.6 634.6 91.6 634.2 90.6 L646.6 77.6 C647.6 78 648.6 78.2 649.8 78.2 C654.2 78 657.2 73.6 656.2 66 L651.6 70.4 L647.6 69.4 L646.8 65.6Z" fill="url(#gWr)" stroke="#8c8c8c" stroke-width=".9" stroke-linejoin="round"/>
 <path d="M626.4 68.8 L640 82.4" stroke="#7e7e7e" stroke-width="3.6"/>
 <path d="M626.4 68.8 L640 82.4" stroke="#c4c4c4" stroke-width="2"/>
 <path d="M620.6 65.6 Q619.8 63.6 622 63.2 Q625 63 627.4 65.4 Q629.2 67.4 628.6 69.8 Q627.8 71.4 626 70.6Z" fill="#d8d8d8" stroke="#8c8c8c" stroke-width=".8"/>
 <path d="M638.2 85 L641.6 81.4 Q642.6 80.6 643.8 81.4 C648 84.6 654 88.6 657.6 92.2 Q661.2 96.2 658.6 99.4 Q655.6 102 651.6 99.2 C648 95.6 643 90.6 638.6 86.8 Q637.6 85.8 638.2 85Z" fill="url(#gHandle)" stroke="#c88408" stroke-width=".8"/>
 <path d="M642.6 82 L657.4 94.6" stroke="#fce070" stroke-width="1.6" stroke-linecap="round" opacity=".8"/>
</g>
<!-- Refresh -->
<g>
 <ellipse cx="728" cy="98" rx="15" ry="1.4" fill="url(#gShadow)"/>
 <path d="M715.2 78 C716.5 71.5 721.5 65.8 728.5 65.8 C733 65.8 737 68 739.4 72 L745.2 70.2 L740.8 83.6 L726.6 78.7 L731.9 76 C730.8 73.5 728.5 72 725.8 71.6 C721.5 71.2 717.5 74 715.2 78Z" fill="url(#gRef1)" stroke="#4a84cc" stroke-width=".7" stroke-linejoin="round"/>
 <path d="M741.2 85.8 C739.8 92 734.8 97.3 728 97.3 C723.5 97.3 719.8 95.5 717 91.4 L711 92.9 L715.4 80 L729.7 83.6 L724.3 86.2 C725.4 88.8 727.8 90.6 730.8 91.2 C735 91.6 739 89.2 741.2 85.8Z" fill="url(#gRef2)" stroke="#4a84cc" stroke-width=".7" stroke-linejoin="round"/>
</g>
<!-- Back / Forward -->
<g>
 <ellipse cx="796" cy="98.6" rx="18" ry="1.6" fill="url(#gShadow)"/>
 <path d="M779.6 80.2 L797 65.9 V72 H812.9 V88.4 H797 V94.5Z" fill="url(#gArrL)" stroke="#6ea02c" stroke-width="1" stroke-linejoin="round"/>
 <path d="M781.6 80.2 L796 68.2 V73 H811.9 V80 C804 80.5 801 77 794 77 C789 77 785 78.6 781.6 80.2Z" fill="#fff" opacity=".32"/>
 <ellipse cx="864" cy="98.6" rx="18" ry="1.6" fill="url(#gShadow)"/>
 <path d="M880.7 80.2 L863.3 65.9 V72 H847.4 V88.4 H863.3 V94.5Z" fill="url(#gArrR)" stroke="#6ea02c" stroke-width="1" stroke-linejoin="round"/>
 <path d="M878.7 80.2 L864.3 68.2 V73 H848.4 V80 C856.3 80.5 859.3 77 866.3 77 C871.3 77 875.3 78.6 878.7 80.2Z" fill="#fff" opacity=".32"/>
</g>
<!--MORE-->

</svg>
<div id="content"><div id="doc">
 <div class="h1">Оценка ликвидности баланса</div>
 <div class="h2">ОАО "Арсенал" (ПРИМЕР)</div>
 <div class="h3">на 01.01.2015 г.</div>
 <div class="gbox" id="g1">
  <p>Ликвидность баланса определяется как степень покрытия обязательств предприятия его активами, срок превращения которых в денежную форму соответствует сроку погашения обязательств. Анализ ликвидности баланса заключается в сравнении средств по активу, сгруппированных по степени их ликвидности и расположенных в порядке убывания ликвидности, с обязательствами по пассиву, сгруппированными по срокам их погашения и расположенными в порядке возрастания сроков.</p>
 </div>
 <div class="h4">Для определения ликвидности баланса следует сопоставить итоги указанных групп по активу и пассиву</div>
 <table class="t">
  <colgroup><col style="width:429px"><col style="width:140px"><col style="width:429px"></colgroup>
  <tr class="hr"><th>АКТИВ</th><th>условия<br>абсолютной<br>ликвидности</th><th>ПАССИВ</th></tr>
  <tr class="r1"><td>А1 – денежные средства организации и краткосрочные финансовые вложение</td><td class="c">А1 ≥ П1</td><td>П1 – кредиторская задолженность, а также ссуды, не погашенные в срок</td></tr>
  <tr class="r2 alt"><td>А2 – дебиторская задолженность и прочие активы</td><td class="c">А2 ≥ П2</td><td>П2 – краткосрочные кредиты и заемные средства</td></tr>
  <tr class="r3"><td>А3 – «Запасы и затраты» (за исключением «Расходов будущих периодов») и «Долгосрочные финансовые вложения»</td><td class="c">А3 ≥ П3</td><td>П3 – долгосрочные кредиты и заемные средства</td></tr>
  <tr class="r4 alt"><td>А4 – статьи раздела I актива баланса «Внеоборотные активы» (за исключением «Долгосрочные финансовые вложения»)</td><td class="c">А4 ≤ П4</td><td>П4 – статьи раздела III пассива баланса «Капитал и резервы»</td></tr>
 </table>
 <div class="gbox" id="g2">
  <p>Если одно или несколько неравенств имеют противоположный знак, ликвидность баланса в большей или меньшей степени отличается от абсолютной.</p>
  <p style="margin-top:8px">Сопоставление ликвидных средств и обязательств позволяет вычислить следующие показатели:</p>
  <p style="margin-top:8px">1. Текущая ликвидность</p>
  <div class="f" style="margin-top:18px">ТЛ = (А1 + А2) - (П1 + П2)</div>
  <p style="margin-top:20px">2. Перспективная ликвидность</p>
  <div class="f" style="margin-top:18px">ПЛ = А3 - П3</div>
  <p style="margin-top:20px">Результаты расчетов по данным ОАО "Арсенал" (ПРИМЕР) показывают, что сопоставление итогов групп по активу и пассиву имеет следующий вид:</p>
 </div>
</div></div>
<div id="vscroll">
 <div class="sbtn" style="top:0px"><svg width="13" height="14" viewBox="0 0 13 14"><path d="M2.4 8.9L6.5 4.8L10.6 8.9" fill="none" stroke="#fff" stroke-width="2.2"/></svg></div>
 <div class="sline" style="top:16px"></div>
 <div id="thumb"><i></i></div>
 <div class="sline" style="top:869px"></div>
 <div class="sbtn" style="top:853px"><svg width="13" height="14" viewBox="0 0 13 14"><path d="M2.4 5.5L6.5 9.6L10.6 5.5" fill="none" stroke="#fff" stroke-width="2.2"/></svg></div>
</div>
<div id="lborder"></div>
<div id="bborder"></div>
</body>
</html>
